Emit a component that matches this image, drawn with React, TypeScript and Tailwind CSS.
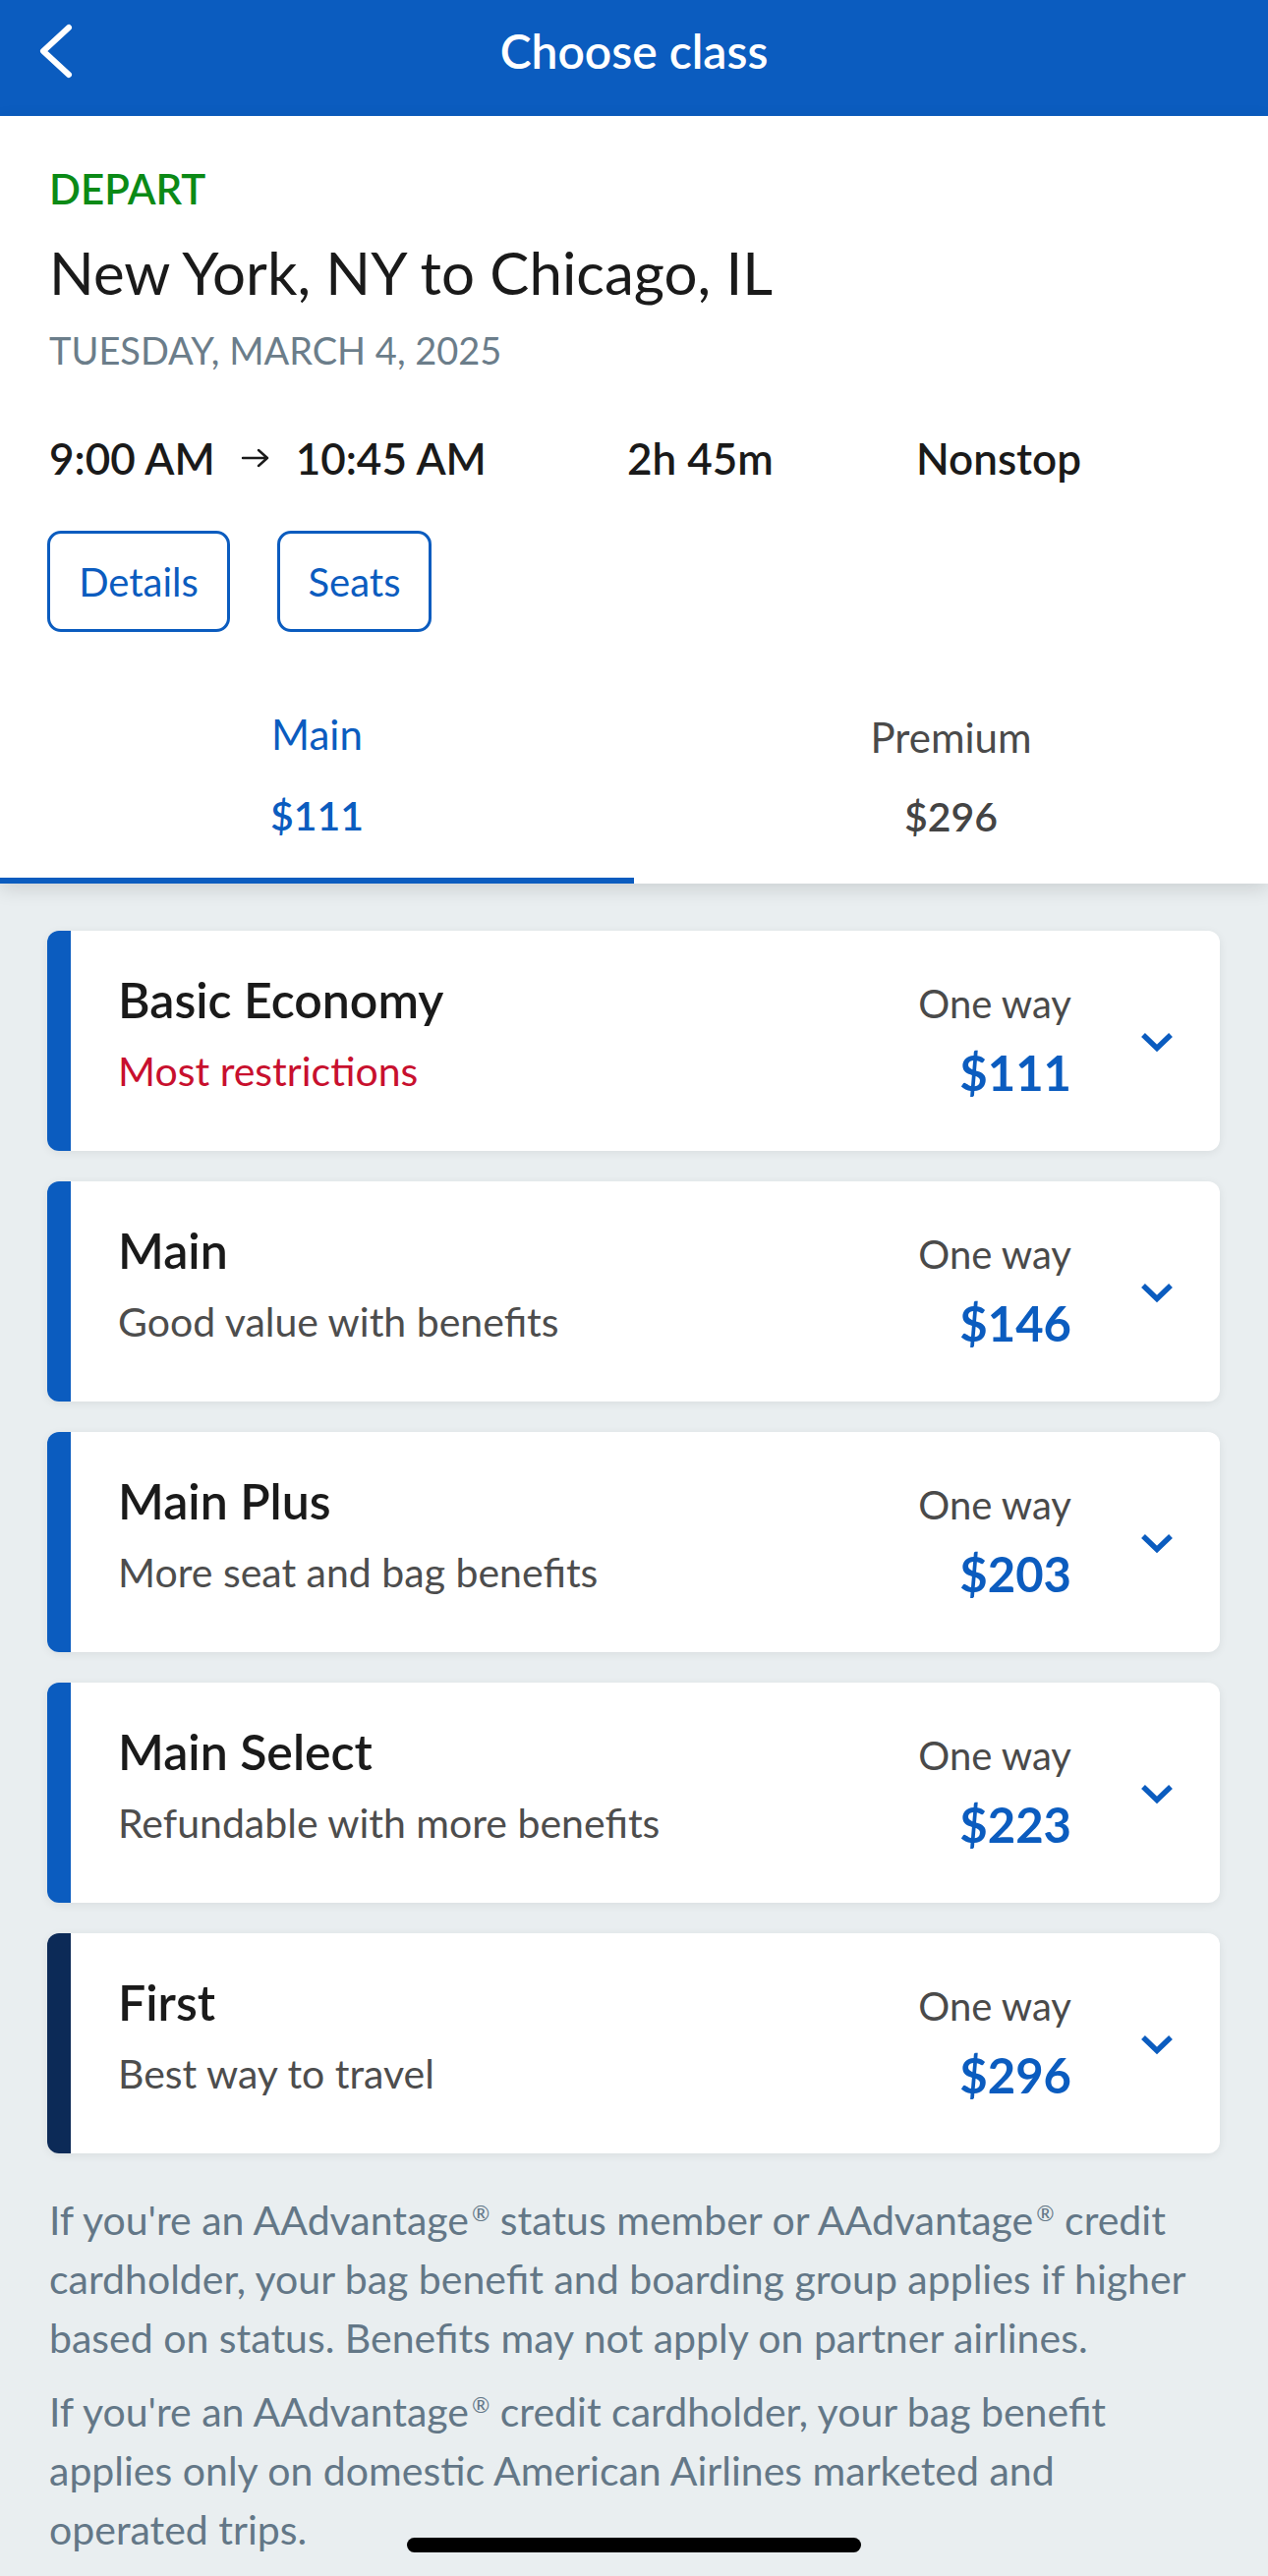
const fares = [
  { name: "Basic Economy", note: "Most restrictions", price: "$111", red: true, dark: false },
  { name: "Main", note: "Good value with benefits", price: "$146", red: false, dark: false },
  { name: "Main Plus", note: "More seat and bag benefits", price: "$203", red: false, dark: false },
  { name: "Main Select", note: "Refundable with more benefits", price: "$223", red: false, dark: false },
  { name: "First", note: "Best way to travel", price: "$296", red: false, dark: true },
];

function Reg() {
  return <span className="relative -top-[14px] ml-[3px] text-[22px] leading-none">®</span>;
}

function FareCard({ fare }: { fare: (typeof fares)[number] }) {
  return (
    <div className="flex h-[224px] bg-white rounded-[12px] overflow-hidden shadow-[0_2px_10px_rgba(0,0,0,0.07)]">
      <div className={fare.dark ? "w-[24px] bg-[#0c2a57]" : "w-[24px] bg-[#0b5cbf]"} />

      <div className="flex-1 pl-[48px] pt-[41px]">
        <div className="text-[50px] leading-[58px] font-semibold text-[#1a1a1a]">{fare.name}</div>
        <div
          className={
            fare.red
              ? "mt-[20px] text-[41px] leading-[48px] text-[#c8102e]"
              : "mt-[20px] text-[41px] leading-[48px] text-[#4d4d4d]"
          }
        >
          {fare.note}
        </div>
      </div>

      <div className="pt-[50px] text-right">
        <div className="text-[40px] leading-[48px] text-[#4a4a4a]">One way</div>
        <div className="mt-[18px] text-[49px] leading-[56px] font-bold text-[#0b5cbf]">{fare.price}</div>
      </div>

      <div className="pl-[69px] pr-[46px] flex items-center">
        <svg width="36" height="22" viewBox="0 0 36 22" fill="none" className="mt-[2px]">
          <path d="M4 4 L18 17.5 L32 4" stroke="#0b5cbf" strokeWidth="5.5" />
        </svg>
      </div>
    </div>
  );
}

export default function App() {
  return (
    <div className="relative w-[1290px] h-[2621px] overflow-hidden bg-[#e9eef0] font-['Lato',sans-serif]">

      {/* Header */}
      <header className="relative h-[118px] bg-[#0b5cbf] flex items-center justify-center">
        <button className="absolute left-[34px] top-[22px]">
          <svg width="44" height="60" viewBox="0 0 44 60" fill="none">
            <path d="M36 6 L10 30 L36 54" stroke="white" strokeWidth="6" strokeLinecap="round" strokeLinejoin="round" />
          </svg>
        </button>
        <h1 className="text-white text-[48px] font-semibold -mt-[14px]">Choose class</h1>
      </header>

      {/* Trip summary */}
      <section className="relative z-10 bg-white shadow-[0_6px_18px_rgba(0,0,0,0.12)]">
        <div className="px-[50px] pt-[49px]">
          <div className="text-[42px] leading-[50px] font-semibold text-[#0b8a16]">DEPART</div>
          <div className="mt-[25px] text-[60px] leading-[70px] text-[#1a1a1a]">New York, NY to Chicago, IL</div>
          <div className="mt-[20px] text-[38px] leading-[48px] text-[#6b7d8a]">TUESDAY, MARCH 4, 2025</div>

          <div className="mt-[60px] flex items-center text-[44px] leading-[52px] font-semibold text-[#1a1a1a]">
            <div className="w-[588px] flex items-center">
              <span>9:00 AM</span>
              <svg width="30" height="24" viewBox="0 0 30 24" fill="none" className="mx-[26px]">
                <path d="M2 12 H27 M18 4 L27 12 L18 20" stroke="#1a1a1a" strokeWidth="2.4" strokeLinecap="round" strokeLinejoin="round" />
              </svg>
              <span>10:45 AM</span>
            </div>
            <div className="w-[294px]">2h 45m</div>
            <div>Nonstop</div>
          </div>

          <div className="mt-[48px] -ml-[2px] flex gap-[48px]">
            <button className="w-[186px] h-[103px] rounded-[14px] border-[3px] border-[#0b5cbf] text-[40px] text-[#0b5cbf]">
              Details
            </button>
            <button className="w-[157px] h-[103px] rounded-[14px] border-[3px] border-[#0b5cbf] text-[40px] text-[#0b5cbf]">
              Seats
            </button>
          </div>
        </div>

        {/* Cabin tabs */}
        <div className="mt-[79px] grid grid-cols-2 text-center">
          <div className="border-b-[6px] border-[#0b5cbf] pb-[38px]">
            <div className="text-[42px] leading-[50px] text-[#0b5cbf]">Main</div>
            <div className="mt-[34px] text-[41px] leading-[48px] font-semibold text-[#0b5cbf]">$111</div>
          </div>
          <div className="pb-[44px] pt-[3px]">
            <div className="text-[42px] leading-[50px] text-[#4a4a4a]">Premium</div>
            <div className="mt-[32px] text-[41px] leading-[48px] font-semibold text-[#444444]">$296</div>
          </div>
        </div>
      </section>

      {/* Fare cards */}
      <main className="pl-[48px] pr-[49px] pt-[48px] flex flex-col gap-[31px]">
        {fares.map((fare) => (
          <FareCard key={fare.name} fare={fare} />
        ))}
      </main>

      {/* Disclaimers */}
      <div className="px-[50px] pt-[38px] text-[41px] leading-[60px] text-[#637787]">
        <p>
          If you're an AAdvantage<Reg /> status member or AAdvantage<Reg /> credit cardholder, your bag benefit and
          boarding group applies if higher based on status. Benefits may not apply on partner airlines.
        </p>
        <p className="mt-[15px]">
          If you're an AAdvantage<Reg /> credit cardholder, your bag benefit
          <br />
          applies only on domestic American Airlines marketed and
          <br />
          operated trips.
        </p>
      </div>

      {/* Home indicator */}
      <div className="absolute bottom-[24px] left-1/2 -translate-x-1/2 w-[462px] h-[15px] rounded-full bg-black" />
    </div>
  );
}
